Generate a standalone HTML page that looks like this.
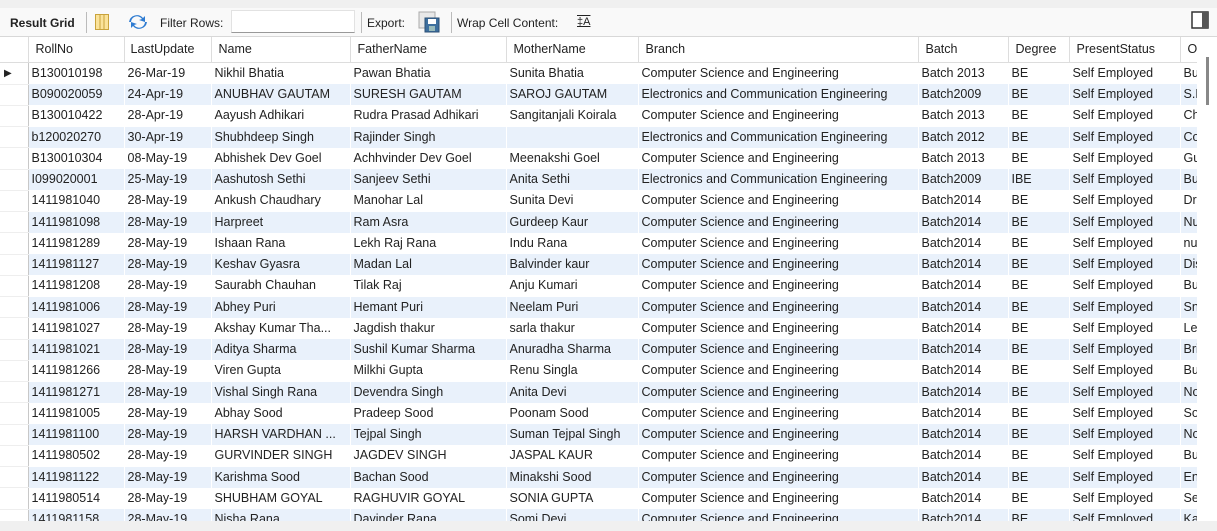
<!DOCTYPE html>
<html><head><meta charset="utf-8"><style>
*{margin:0;padding:0;box-sizing:border-box}
body{width:1217px;height:531px;overflow:hidden;background:#f0f0f0;font-family:Tahoma,"Liberation Sans",sans-serif;font-size:12.5px;color:#222;position:relative}
#tb{position:absolute;left:0;top:8px;width:1217px;height:29px;background:#f9f9f9;border-bottom:1px solid #d8d8d8}
#tb span{position:absolute;top:8px;font-size:12px;white-space:nowrap}
.sep{position:absolute;top:4px;width:1px;height:21px;background:#bbb}
#grid{position:absolute;left:0;top:37px;width:1217px;height:484px;background:#fff;overflow:hidden}
table{position:absolute;left:0;top:0;border-collapse:collapse;table-layout:fixed}
td{height:21.25px;white-space:nowrap;overflow:hidden;padding:0 0 0 3px;border-right:1px solid #fff;line-height:21px}
tr:nth-child(odd) td{background:#e9f1fb}
tr.h td{height:25px;background:#fff!important;border-right:1px solid #ddd;border-bottom:1px solid #ddd;padding-left:7px}
td.r{background:#fff!important;border-right:1px solid #c8c8c8;border-bottom:1px solid #eee;padding:0}
#sb{position:absolute;left:1197px;top:37px;width:20px;height:484px;background:#fff}
#thumb{position:absolute;left:1206px;top:57px;width:3px;height:48px;background:#888}
</style></head><body>
<div id="tb">
<span style="left:10px;font-weight:bold">Result Grid</span>
<div class="sep" style="left:86px"></div>
<svg style="position:absolute;left:95px;top:6px" width="14" height="16"><rect x="0.5" y="0.5" width="13" height="15" fill="#fbe39a" stroke="#c9a33c"/><line x1="5" y1="1" x2="5" y2="15" stroke="#c9a33c"/><line x1="9" y1="1" x2="9" y2="15" stroke="#c9a33c"/></svg>
<svg style="position:absolute;left:128px;top:6px" width="20" height="16"><path d="M3 8a6 6 0 0 1 11-3l-3 1 6 2 0-6-2 2A8 8 0 0 0 1 8z" fill="#2e7bd1"/><path d="M17 8a6 6 0 0 1-11 3l3-1-6-2 0 6 2-2A8 8 0 0 0 19 8z" fill="#2e7bd1"/></svg>
<span style="left:160px">Filter Rows:</span>
<div style="position:absolute;left:231px;top:2px;width:124px;height:23px;background:#fff;border:1px solid #e2e2e2;border-bottom-color:#999"></div>
<div class="sep" style="left:361px"></div>
<span style="left:367px">Export:</span>
<svg style="position:absolute;left:418px;top:3px" width="22" height="22"><rect x="1" y="1" width="16" height="16" fill="#e8e8e8" stroke="#aaa"/><rect x="7" y="7" width="14" height="14" fill="#3d6f9e" stroke="#2a4f75"/><rect x="10" y="8" width="8" height="5" fill="#fff"/><rect x="11" y="15" width="6" height="5" fill="#9bb"/></svg>
<div class="sep" style="left:451px"></div>
<span style="left:457px">Wrap Cell Content:</span>
<span style="left:577px;font-size:11px;text-decoration:underline overline">‡A</span>
<svg style="position:absolute;left:1191px;top:3px" width="18" height="18"><rect x="1" y="1" width="16" height="16" fill="#fff" stroke="#333" stroke-width="1.5"/><rect x="11" y="1" width="6" height="16" fill="#555"/></svg>
</div>
<div id="grid">
<table>
<colgroup><col style="width:28px"><col style="width:96px"><col style="width:87px"><col style="width:139px"><col style="width:156px"><col style="width:132px"><col style="width:280px"><col style="width:90px"><col style="width:61px"><col style="width:111px"><col style="width:17px"></colgroup>
<tr class="h"><td class="r" style="border-bottom:1px solid #ddd"></td><td>RollNo</td><td style="padding-left:6px">LastUpdate</td><td>Name</td><td>FatherName</td><td>MotherName</td><td>Branch</td><td>Batch</td><td>Degree</td><td>PresentStatus</td><td>O</td></tr>
<tr><td class="r" style="font-size:10px;padding-left:4px">▶</td><td>B130010198</td><td>26-Mar-19</td><td>Nikhil Bhatia</td><td>Pawan Bhatia</td><td>Sunita Bhatia</td><td>Computer Science and Engineering</td><td>Batch 2013</td><td>BE</td><td>Self Employed</td><td>Bu</td></tr>
<tr><td class="r"></td><td>B090020059</td><td>24-Apr-19</td><td>ANUBHAV GAUTAM</td><td>SURESH GAUTAM</td><td>SAROJ GAUTAM</td><td>Electronics and Communication Engineering</td><td>Batch2009</td><td>BE</td><td>Self Employed</td><td>S.I</td></tr>
<tr><td class="r"></td><td>B130010422</td><td>28-Apr-19</td><td>Aayush Adhikari</td><td>Rudra Prasad Adhikari</td><td>Sangitanjali Koirala</td><td>Computer Science and Engineering</td><td>Batch 2013</td><td>BE</td><td>Self Employed</td><td>Ch</td></tr>
<tr><td class="r"></td><td>b120020270</td><td>30-Apr-19</td><td>Shubhdeep Singh</td><td>Rajinder Singh</td><td></td><td>Electronics and Communication Engineering</td><td>Batch 2012</td><td>BE</td><td>Self Employed</td><td>Co</td></tr>
<tr><td class="r"></td><td>B130010304</td><td>08-May-19</td><td>Abhishek Dev Goel</td><td>Achhvinder Dev Goel</td><td>Meenakshi Goel</td><td>Computer Science and Engineering</td><td>Batch 2013</td><td>BE</td><td>Self Employed</td><td>Gu</td></tr>
<tr><td class="r"></td><td>I099020001</td><td>25-May-19</td><td>Aashutosh Sethi</td><td>Sanjeev Sethi</td><td>Anita Sethi</td><td>Electronics and Communication Engineering</td><td>Batch2009</td><td>IBE</td><td>Self Employed</td><td>Bu</td></tr>
<tr><td class="r"></td><td>1411981040</td><td>28-May-19</td><td>Ankush Chaudhary</td><td>Manohar Lal</td><td>Sunita Devi</td><td>Computer Science and Engineering</td><td>Batch2014</td><td>BE</td><td>Self Employed</td><td>Dr</td></tr>
<tr><td class="r"></td><td>1411981098</td><td>28-May-19</td><td>Harpreet</td><td>Ram Asra</td><td>Gurdeep Kaur</td><td>Computer Science and Engineering</td><td>Batch2014</td><td>BE</td><td>Self Employed</td><td>Nu</td></tr>
<tr><td class="r"></td><td>1411981289</td><td>28-May-19</td><td>Ishaan Rana</td><td>Lekh Raj Rana</td><td>Indu Rana</td><td>Computer Science and Engineering</td><td>Batch2014</td><td>BE</td><td>Self Employed</td><td>nu</td></tr>
<tr><td class="r"></td><td>1411981127</td><td>28-May-19</td><td>Keshav Gyasra</td><td>Madan Lal</td><td>Balvinder kaur</td><td>Computer Science and Engineering</td><td>Batch2014</td><td>BE</td><td>Self Employed</td><td>Dis</td></tr>
<tr><td class="r"></td><td>1411981208</td><td>28-May-19</td><td>Saurabh Chauhan</td><td>Tilak Raj</td><td>Anju Kumari</td><td>Computer Science and Engineering</td><td>Batch2014</td><td>BE</td><td>Self Employed</td><td>Bu</td></tr>
<tr><td class="r"></td><td>1411981006</td><td>28-May-19</td><td>Abhey Puri</td><td>Hemant Puri</td><td>Neelam Puri</td><td>Computer Science and Engineering</td><td>Batch2014</td><td>BE</td><td>Self Employed</td><td>Sn</td></tr>
<tr><td class="r"></td><td>1411981027</td><td>28-May-19</td><td>Akshay Kumar Tha...</td><td>Jagdish thakur</td><td>sarla thakur</td><td>Computer Science and Engineering</td><td>Batch2014</td><td>BE</td><td>Self Employed</td><td>Le</td></tr>
<tr><td class="r"></td><td>1411981021</td><td>28-May-19</td><td>Aditya Sharma</td><td>Sushil Kumar Sharma</td><td>Anuradha Sharma</td><td>Computer Science and Engineering</td><td>Batch2014</td><td>BE</td><td>Self Employed</td><td>Bri</td></tr>
<tr><td class="r"></td><td>1411981266</td><td>28-May-19</td><td>Viren Gupta</td><td>Milkhi Gupta</td><td>Renu Singla</td><td>Computer Science and Engineering</td><td>Batch2014</td><td>BE</td><td>Self Employed</td><td>Bu</td></tr>
<tr><td class="r"></td><td>1411981271</td><td>28-May-19</td><td>Vishal Singh Rana</td><td>Devendra Singh</td><td>Anita Devi</td><td>Computer Science and Engineering</td><td>Batch2014</td><td>BE</td><td>Self Employed</td><td>No</td></tr>
<tr><td class="r"></td><td>1411981005</td><td>28-May-19</td><td>Abhay Sood</td><td>Pradeep Sood</td><td>Poonam Sood</td><td>Computer Science and Engineering</td><td>Batch2014</td><td>BE</td><td>Self Employed</td><td>So</td></tr>
<tr><td class="r"></td><td>1411981100</td><td>28-May-19</td><td>HARSH VARDHAN ...</td><td>Tejpal Singh</td><td>Suman Tejpal Singh</td><td>Computer Science and Engineering</td><td>Batch2014</td><td>BE</td><td>Self Employed</td><td>No</td></tr>
<tr><td class="r"></td><td>1411980502</td><td>28-May-19</td><td>GURVINDER SINGH</td><td>JAGDEV SINGH</td><td>JASPAL KAUR</td><td>Computer Science and Engineering</td><td>Batch2014</td><td>BE</td><td>Self Employed</td><td>Bu</td></tr>
<tr><td class="r"></td><td>1411981122</td><td>28-May-19</td><td>Karishma Sood</td><td>Bachan Sood</td><td>Minakshi Sood</td><td>Computer Science and Engineering</td><td>Batch2014</td><td>BE</td><td>Self Employed</td><td>En</td></tr>
<tr><td class="r"></td><td>1411980514</td><td>28-May-19</td><td>SHUBHAM GOYAL</td><td>RAGHUVIR GOYAL</td><td>SONIA GUPTA</td><td>Computer Science and Engineering</td><td>Batch2014</td><td>BE</td><td>Self Employed</td><td>Se</td></tr>
<tr><td class="r"></td><td>1411981158</td><td>28-May-19</td><td>Nisha Rana</td><td>Davinder Rana</td><td>Somi Devi</td><td>Computer Science and Engineering</td><td>Batch2014</td><td>BE</td><td>Self Employed</td><td>Ka</td></tr>
</table>
</div>
<div id="sb"></div><div id="thumb"></div>
</body></html>
